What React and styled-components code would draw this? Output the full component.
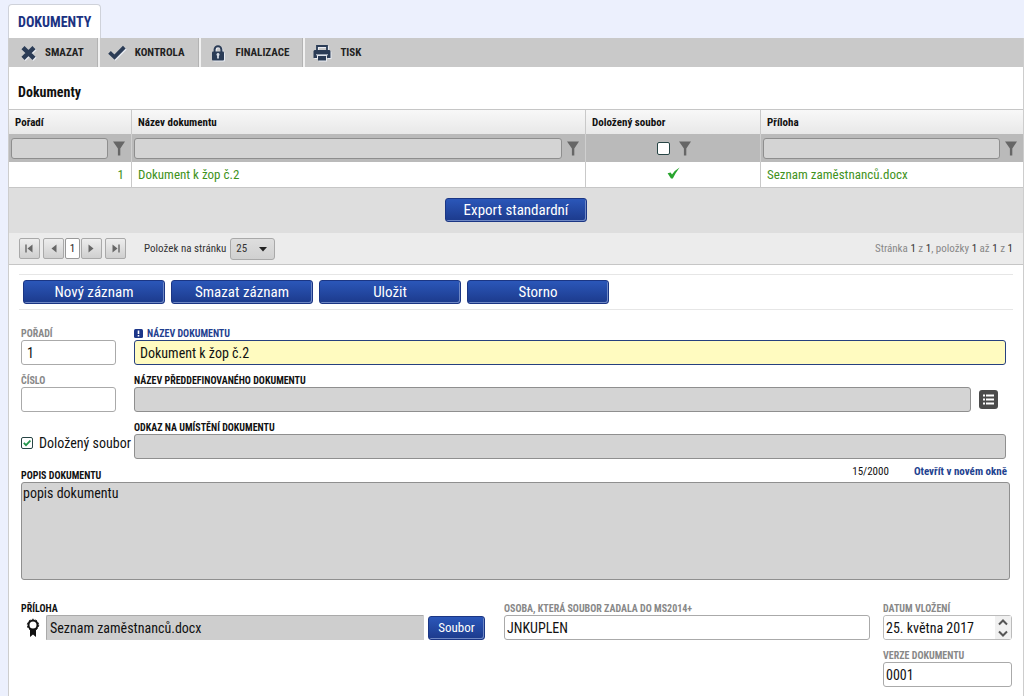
import React from "react";
import styled, { createGlobalStyle } from "styled-components";

const GlobalStyle = createGlobalStyle`
  * {
    box-sizing: border-box;
  }
  body {
    margin: 0;
    background: #ecf0fd;
    color: #111;
    font-family: "Roboto Condensed", "Liberation Sans Narrow", Roboto, sans-serif;
    font-size: 13px;
  }
  button, input, select, textarea {
    font-family: inherit;
    color: inherit;
    margin: 0;
  }
  button {
    cursor: pointer;
  }
`;

const Page = styled.div`
  min-height: 100vh;
  display: flex;
  flex-direction: column;
  padding: 4px 0 0 8px;
`;

const Tab = styled.a`
  align-self: flex-start;
  height: 34px;
  line-height: 34px;
  padding: 0 9px;
  background: #fff;
  border: 1px solid #cfd2da;
  border-bottom: 0;
  border-radius: 4px 4px 0 0;
  color: #1b3282;
  font-size: 14px;
  font-weight: 700;
  text-decoration: none;
`;

const Panel = styled.main`
  flex: 1;
  background: #fff;
  border: solid #cdcdcd;
  border-width: 0 1px;
`;

const Toolbar = styled.div`
  display: flex;
  height: 29px;
  padding-left: 2px;
  background: #c9c9c9;
`;

const Tool = styled.button`
  display: flex;
  align-items: center;
  gap: ${props => props.$gap || 9}px;
  padding: 0 14px 0 ${props => props.$start || 8}px;
  border: 0;
  border-right: 2px solid ${props => (props.$last ? "transparent" : "#f1f1f1")};
  box-shadow: ${props => (props.$last ? "none" : "inset -1px 0 #b3b3b3")};
  background: none;
  color: #222;
  font-size: 11px;
  font-weight: 700;
  svg {
    filter: drop-shadow(1px 1px 0 #e8ebf2);
  }
`;

const Title = styled.h1`
  margin: 0;
  padding: 4px 9px 0;
  height: 42px;
  line-height: 42px;
  font-size: 14px;
  font-weight: 700;
`;

const Grid = styled.table`
  width: 100%;
  table-layout: fixed;
  border-collapse: separate;
  border-spacing: 0;
  border-top: 1px solid #c6c6c6;
  th, td {
    padding: 0 6px;
    border-left: 1px solid #c9c9c9;
    text-align: left;
  }
  th:first-child, td:first-child {
    border-left: 0;
  }
  thead th {
    height: 24px;
    padding-top: 1px;
    background: linear-gradient(#f8f8f8, #e8e8e8);
    font-size: 11px;
    font-weight: 700;
  }
  thead td {
    height: 28px;
    padding: 0 6px 0 2px;
    background: #bababa;
    border-left-color: #cfcfcf;
  }
  tbody td {
    height: 26px;
    border-bottom: 1px solid #c6c6c6;
    color: #3f921c;
  }
  tbody td:first-child {
    padding-right: 7px;
    text-align: right;
  }
`;

const Filter = styled.div`
  display: flex;
  align-items: center;
  justify-content: center;
  gap: ${props => props.$gap || 5}px;
  padding-left: ${props => props.$indent || 0}px;
`;

const FilterInput = styled.input`
  flex: 1;
  min-width: 0;
  height: 21px;
  border: 1px solid #8e8e8e;
  border-radius: 3px;
  background: #d4d4d4;
`;

const IconButton = styled.button`
  display: flex;
  padding: 0;
  border: 0;
  background: none;
`;

const CheckCell = styled.td`
  svg {
    display: block;
    margin: 0 auto 4px;
  }
`;

const Primary = styled.button`
  width: ${props => props.$width || 142}px;
  height: 24px;
  padding: 0;
  border: 1px solid #1b3684;
  border-radius: 3px;
  background: linear-gradient(#2b57b9, #1c3a8c);
  box-shadow: inset -1px -1px #6f88c4;
  color: #fff;
  font-size: ${props => props.$size || 15}px;
`;

const ExportBar = styled.div`
  display: flex;
  align-items: center;
  justify-content: center;
  height: 45px;
  padding-bottom: 2px;
  background: #dedede;
`;

const Pager = styled.div`
  display: flex;
  align-items: center;
  height: 32px;
  padding: 0 10px;
  background: #ececec;
  border-bottom: 1px solid #c6c6c6;
  color: #333;
  font-size: 11px;
`;

const PageButtons = styled.div`
  display: flex;
  gap: 1px;
  margin-right: 18px;
`;

const PageButton = styled.button`
  display: flex;
  align-items: center;
  justify-content: center;
  width: ${props => (props.$current ? 15 : 21)}px;
  height: 21px;
  padding: 0;
  margin-left: ${props => (props.$spaced ? 2 : 0)}px;
  border: 1px solid ${props => (props.$current ? "#999" : "#a9a9a9")};
  border-radius: 2px;
  background: ${props => (props.$current ? "#fff" : "linear-gradient(#ededed, #cfcfcf)")};
  color: #222;
  font-size: 11px;
`;

const SelectBox = styled.span`
  position: relative;
  margin-left: 4px;
  select {
    appearance: none;
    display: block;
    width: 45px;
    height: 22px;
    padding: 0 5px;
    border: 1px solid #a9a9a9;
    border-radius: 3px;
    background: linear-gradient(#dedede, #d0d0d0);
    font-size: 11px;
  }
  svg {
    position: absolute;
    right: 8px;
    top: 9px;
    pointer-events: none;
  }
`;

const Summary = styled.span`
  margin-left: auto;
  color: #888;
  b {
    color: #333;
    font-weight: 400;
  }
`;

const Actions = styled.div`
  display: flex;
  gap: 6px;
  margin: 9px 10px 0;
  padding: 5px 4px;
  border: solid #e6e6e6;
  border-width: 1px 0;
`;

const Form = styled.form`
  padding: 16px 11px 8px 12px;
`;

const TopFields = styled.div`
  display: grid;
  grid-template-columns: 95px minmax(0, 1fr);
  gap: 8px 18px;
  padding-right: 6px;
`;

const FieldBox = styled.div`
  min-width: 0;
  display: flex;
  flex-direction: column;
`;

const Label = styled.label`
  display: flex;
  align-items: center;
  gap: 4px;
  height: 14px;
  padding-top: 1px;
  color: ${props => props.$color || "#111"};
  font-size: 10px;
  font-weight: 700;
  white-space: nowrap;
`;

const Line = styled.div`
  display: flex;
  align-items: center;
`;

const TextInput = styled.input`
  flex: 1;
  min-width: 0;
  width: 100%;
  height: 25px;
  padding: 0 ${props => (props.$tight ? 2 : 5)}px;
  border: 1px solid ${props => (props.$tone === "active" ? "#26407f" : props.$tone === "off" ? "#8f8f8f" : "#aaa")};
  border-radius: 3px;
  background: ${props => (props.$tone === "active" ? "#fffbc0" : props.$tone === "off" ? "#d4d4d4" : "#fff")};
  font-size: 14px;
`;

const ListButton = styled.button`
  display: flex;
  align-items: center;
  justify-content: center;
  width: 19px;
  height: 19px;
  margin: 0 8px;
  padding: 0;
  border: 0;
  border-radius: 3px;
  background: #4b4b4b;
`;

const CheckLabel = styled.label`
  display: flex;
  align-items: center;
  align-self: end;
  gap: 6px;
  height: 32px;
  font-size: 14px;
  white-space: nowrap;
`;

const CheckBox = styled.span`
  position: relative;
  display: flex;
  input {
    appearance: none;
    width: ${props => props.$size || 12}px;
    height: ${props => props.$size || 12}px;
    border: 1px solid #274545;
    border-radius: 2px;
    background: #fff;
  }
  svg {
    position: absolute;
    left: 2px;
    top: 2px;
    display: none;
    pointer-events: none;
  }
  input:checked + svg {
    display: block;
  }
`;

const NoteHead = styled.div`
  display: flex;
  align-items: flex-end;
  height: 23px;
  padding-right: 5px;
`;

const NoteTools = styled.div`
  display: flex;
  gap: 25px;
  margin-left: auto;
  height: 20px;
  line-height: 20px;
  font-size: 11px;
  a {
    color: #1f4390;
    font-weight: 700;
    text-decoration: none;
  }
`;

const Note = styled.textarea`
  display: block;
  width: calc(100% - 2px);
  height: 98px;
  padding: 2px 1px;
  border: 1px solid #8f8f8f;
  border-radius: 3px;
  background: #d4d4d4;
  font-size: 14px;
  line-height: 17px;
  resize: none;
`;

const BottomFields = styled.div`
  display: grid;
  grid-template-columns: minmax(0, 470fr) minmax(0, 366fr) 129px;
  gap: 8px 13px;
  padding-top: 21px;
`;

const Attachment = styled.div`
  display: flex;
  align-items: center;
  gap: 4px;
  padding: 0 6px 0 5px;
  svg {
    flex: none;
    margin-right: 2px;
  }
`;

const FileName = styled(TextInput)`
  padding: 0 3px;
  border-color: #aaa #cecece #cecece #aaa;
  border-radius: 2px 0 0 0;
  background: #cecece;
`;

const DateBox = styled.div`
  display: flex;
  height: 25px;
  border: 1px solid #bbb;
  border-radius: 3px;
  input {
    height: 23px;
    border: 0;
  }
`;

const Spinner = styled.div`
  display: flex;
  flex-direction: column;
  justify-content: center;
  gap: 4px;
  padding: 0 3px;
  background: #f0f0f0;
`;

const VersionCell = styled.div`
  grid-column: 3;
`;

const Funnel = () => (
  <svg width="12" height="15" viewBox="0 0 12 15">
    <path d="M0 0.5h12L7.3 7.5v7H4.9v-7z" fill="#666" />
  </svg>
);

const CrossIcon = () => (
  <svg width="15" height="14" viewBox="0 0 15 14">
    <path d="M2 1.6l11 10.8M13 1.6L2 12.4" stroke="#2b3c56" strokeWidth="4.4" />
  </svg>
);

const TickIcon = () => (
  <svg width="18" height="15" viewBox="0 0 18 15">
    <path d="M1.5 7.3l5 4.8L16.3 2.2" fill="none" stroke="#2b3c56" strokeWidth="3.8" />
  </svg>
);

const LockIcon = () => (
  <svg width="14" height="16" viewBox="0 0 14 16">
    <path d="M3.6 7V4.6a3.4 3.4 0 0 1 6.8 0V7" fill="none" stroke="#2b3c56" strokeWidth="2" />
    <rect x="1" y="6.5" width="12" height="9" rx="1" fill="#2b3c56" />
    <path d="M7 8.6v4.8" stroke="#d5dbe5" strokeWidth="1.8" />
    <circle cx="7" cy="9.6" r="1.5" fill="#d5dbe5" />
  </svg>
);

const PrintIcon = () => (
  <svg width="18" height="16" viewBox="0 0 18 16">
    <path d="M4 5.5V1h10v4.5" fill="none" stroke="#2b3c56" strokeWidth="1.8" />
    <path d="M1.5 5h15l1 1v7H14v-3H4v3H.5V6z" fill="#2b3c56" />
    <path d="M5 11h8v4.5H5z" fill="#2b3c56" />
    <path d="M3 9.8h12" stroke="#c9d0dc" />
  </svg>
);

const GreenTick = () => (
  <svg width="13" height="12" viewBox="0 0 13 12" role="img" aria-label="Ano">
    <path d="M.6 6.2l3-.8 1.4 2Q8 3 12.6.4 8.6 5.6 5.8 11.4H4z" fill="#28a52e" />
  </svg>
);

const SmallTick = () => (
  <svg width="8" height="8" viewBox="0 0 8 8">
    <path d="M.8 3.8L3 6.2 7.4 1.5" fill="none" stroke="#22964c" strokeWidth="1.8" />
  </svg>
);

const RibbonIcon = () => (
  <svg width="14" height="20" viewBox="0 0 14 20">
    <circle cx="7" cy="7" r="4.5" fill="none" stroke="#111" strokeWidth="2" />
    <circle cx="7" cy="7" r="5.7" fill="none" stroke="#111" strokeWidth="1" strokeDasharray="1.8 1.8" />
    <path d="M4 11.5h6V19l-3-2.6L4 19z" fill="#111" />
  </svg>
);

const ListIcon = () => (
  <svg width="11" height="11" viewBox="0 0 11 11">
    <path d="M0 1.5h2M0 5.5h2M0 9.5h2M3 1.5h8M3 5.5h8M3 9.5h8" stroke="#fff" strokeWidth="1.8" />
  </svg>
);

const Alert = () => (
  <svg width="9" height="9" viewBox="0 0 9 9">
    <rect width="9" height="9" rx="1.5" fill="#1c3689" />
    <path d="M4.5 1.5v3.6M4.5 6v1.6" stroke="#fff" strokeWidth="1.6" />
  </svg>
);

const Arrow = ({ left, bar }) => (
  <svg width="9" height="9" viewBox="0 0 9 9">
    <g transform={left ? "rotate(180 4.5 4.5)" : undefined}>
      <path d="M1.5 0.5v8l5-4z" fill="#666" />
      {bar && <path d="M8 0.5v8" stroke="#666" strokeWidth="1.4" />}
    </g>
  </svg>
);

const Chevron = ({ up }) => (
  <svg width="10" height="7" viewBox="0 0 10 7">
    <path d={up ? "M1 5.5l4-4 4 4" : "M1 1.5l4 4 4-4"} fill="none" stroke="#555" strokeWidth="2" />
  </svg>
);

const FilterField = ({ label }) => (
  <Filter>
    <FilterInput aria-label={label} />
    <IconButton type="button" aria-label="Filtr">
      <Funnel />
    </IconButton>
  </Filter>
);

const Field = ({ id, label, color, icon, button, ...rest }) => (
  <FieldBox>
    <Label htmlFor={id} $color={color}>
      {icon}
      {label}
    </Label>
    <Line>
      <TextInput id={id} {...rest} />
      {button}
    </Line>
  </FieldBox>
);

export default () => (
  <Page>
    <GlobalStyle />
    <Tab href="#dokumenty">DOKUMENTY</Tab>
    <Panel id="dokumenty">
      <Toolbar>
        <Tool type="button" $start={10}>
          <CrossIcon />
          SMAZAT
        </Tool>
        <Tool type="button">
          <TickIcon />
          KONTROLA
        </Tool>
        <Tool type="button" $start={10} $gap={11}>
          <LockIcon />
          FINALIZACE
        </Tool>
        <Tool type="button" $last>
          <PrintIcon />
          TISK
        </Tool>
      </Toolbar>
      <Title>Dokumenty</Title>
      <Grid>
        <colgroup>
          <col width="122" />
          <col />
          <col width="175" />
          <col width="263" />
        </colgroup>
        <thead>
          <tr>
            <th>Pořadí</th>
            <th>Název dokumentu</th>
            <th>Doložený soubor</th>
            <th>Příloha</th>
          </tr>
          <tr>
            <td>
              <FilterField label="Pořadí" />
            </td>
            <td>
              <FilterField label="Název dokumentu" />
            </td>
            <td>
              <Filter $gap={9} $indent={6}>
                <CheckBox $size={13}>
                  <input type="checkbox" aria-label="Doložený soubor" />
                  <SmallTick />
                </CheckBox>
                <IconButton type="button" aria-label="Filtr">
                  <Funnel />
                </IconButton>
              </Filter>
            </td>
            <td>
              <FilterField label="Příloha" />
            </td>
          </tr>
        </thead>
        <tbody>
          <tr>
            <td>1</td>
            <td>Dokument k žop č.2</td>
            <CheckCell>
              <GreenTick />
            </CheckCell>
            <td>Seznam zaměstnanců.docx</td>
          </tr>
        </tbody>
      </Grid>
      <ExportBar>
        <Primary type="button">Export standardní</Primary>
      </ExportBar>
      <Pager>
        <PageButtons>
          <PageButton type="button" aria-label="První">
            <Arrow left bar />
          </PageButton>
          <PageButton type="button" aria-label="Předchozí" $spaced>
            <Arrow left />
          </PageButton>
          <PageButton type="button" $current>
            1
          </PageButton>
          <PageButton type="button" aria-label="Další">
            <Arrow />
          </PageButton>
          <PageButton type="button" aria-label="Poslední" $spaced>
            <Arrow bar />
          </PageButton>
        </PageButtons>
        <label htmlFor="pageSize">Položek na stránku</label>
        <SelectBox>
          <select id="pageSize" defaultValue="25">
            <option>25</option>
          </select>
          <svg width="8" height="5" viewBox="0 0 8 5">
            <path d="M0 0h8L4 4.5z" fill="#222" />
          </svg>
        </SelectBox>
        <Summary>
          Stránka <b>1</b> z <b>1</b>, položky <b>1</b> až <b>1</b> z <b>1</b>
        </Summary>
      </Pager>
      <Actions>
        <Primary type="button">Nový záznam</Primary>
        <Primary type="button">Smazat záznam</Primary>
        <Primary type="button">Uložit</Primary>
        <Primary type="button">Storno</Primary>
      </Actions>
      <Form>
        <TopFields>
          <Field id="order" label="POŘADÍ" color="#888" defaultValue="1" />
          <Field
            id="name"
            label="NÁZEV DOKUMENTU"
            color="#1f3f8f"
            icon={<Alert />}
            $tone="active"
            defaultValue="Dokument k žop č.2"
          />
          <Field id="number" label="ČÍSLO" color="#888" />
          <Field
            id="preset"
            label="NÁZEV PŘEDDEFINOVANÉHO DOKUMENTU"
            $tone="off"
            readOnly
            button={
              <ListButton type="button" aria-label="Vybrat">
                <ListIcon />
              </ListButton>
            }
          />
          <CheckLabel>
            <CheckBox>
              <input type="checkbox" defaultChecked />
              <SmallTick />
            </CheckBox>
            Doložený soubor
          </CheckLabel>
          <Field id="link" label="ODKAZ NA UMÍSTĚNÍ DOKUMENTU" $tone="off" />
        </TopFields>
        <NoteHead>
          <Label htmlFor="note">POPIS DOKUMENTU</Label>
          <NoteTools>
            <span>15/2000</span>
            <a href="#okno">Otevřít v novém okně</a>
          </NoteTools>
        </NoteHead>
        <Note id="note" defaultValue="popis dokumentu" />
        <BottomFields>
          <FieldBox>
            <Label htmlFor="file">PŘÍLOHA</Label>
            <Attachment>
              <RibbonIcon />
              <FileName id="file" readOnly value="Seznam zaměstnanců.docx" />
              <Primary type="button" $width={57} $size={13}>
                Soubor
              </Primary>
            </Attachment>
          </FieldBox>
          <Field
            id="person"
            label="OSOBA, KTERÁ SOUBOR ZADALA DO MS2014+"
            color="#888"
            $tight
            defaultValue="JNKUPLEN"
          />
          <FieldBox>
            <Label htmlFor="date" $color="#888">
              DATUM VLOŽENÍ
            </Label>
            <DateBox>
              <TextInput id="date" $tight defaultValue="25. května 2017" />
              <Spinner>
                <IconButton type="button" aria-label="Zvýšit">
                  <Chevron up />
                </IconButton>
                <IconButton type="button" aria-label="Snížit">
                  <Chevron />
                </IconButton>
              </Spinner>
            </DateBox>
          </FieldBox>
          <VersionCell>
            <Field id="version" label="VERZE DOKUMENTU" color="#888" $tight defaultValue="0001" />
          </VersionCell>
        </BottomFields>
      </Form>
    </Panel>
  </Page>
);
